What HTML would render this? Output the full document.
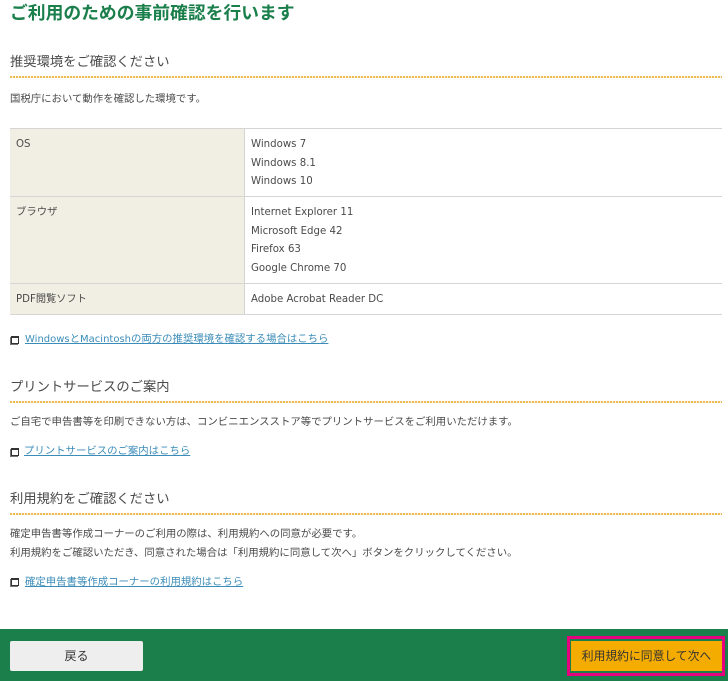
<!DOCTYPE html>
<html lang="ja"><head><meta charset="utf-8"><style>
html,body{margin:0;padding:0;width:728px;height:681px;overflow:hidden;background:#fff}
body{position:relative;font-family:"DejaVu Sans","Noto Sans CJK JP",sans-serif;color:#4a4a4a;font-size:10.4px}
.t{position:absolute;white-space:nowrap;line-height:16px;margin-top:1px}
.v{font-size:10.2px;margin-top:2px}
h1{position:absolute;margin:0;left:10px;top:0;font-size:17.8px;line-height:24px;color:#1a7f4b;font-weight:bold;white-space:nowrap;font-family:"Noto Sans CJK JP",sans-serif}
.h{position:absolute;left:10px;font-size:13.3px;line-height:20px;color:#4a4a4a;white-space:nowrap;font-family:"Noto Sans CJK JP",sans-serif}
.dot{position:absolute;left:10px;width:712px;height:2px;background:repeating-linear-gradient(90deg,#eebb55 0,#eebb55 2px,#fdf3dc 2px,#fdf3dc 3px)}
.b{position:absolute;background:#f1efe4}
.l{position:absolute;background:#d5d5d5}
a{color:#3b8cb8;text-decoration:underline}
a span{font-size:10px}
.ic{position:absolute;left:11px;width:6px;height:5px;border:1px solid #333;border-top-width:2px;box-shadow:-1px 1px 0 #777}
</style></head><body>
<h1>ご利用のための事前確認を行います</h1>
<div class="h" style="top:51px">推奨環境をご確認ください</div>
<div class="dot" style="top:76px"></div>
<div class="t" style="left:10px;top:90px">国税庁において動作を確認した環境です。</div>

<div class="b" style="left:10px;top:128px;width:234px;height:187px"></div>
<div class="l" style="left:10px;top:128px;width:712px;height:1px"></div>
<div class="l" style="left:10px;top:196px;width:712px;height:1px"></div>
<div class="l" style="left:10px;top:283px;width:712px;height:1px"></div>
<div class="l" style="left:10px;top:314px;width:712px;height:1px"></div>
<div class="l" style="left:244px;top:128px;width:1px;height:187px"></div>

<div class="t v" style="left:16px;top:135px">OS</div>
<div class="t v" style="left:251px;top:135px">Windows 7</div>
<div class="t v" style="left:251px;top:154px">Windows 8.1</div>
<div class="t v" style="left:251px;top:172px">Windows 10</div>
<div class="t" style="left:16px;top:203px">ブラウザ</div>
<div class="t v" style="left:251px;top:203px">Internet Explorer 11</div>
<div class="t v" style="left:251px;top:222px">Microsoft Edge 42</div>
<div class="t v" style="left:251px;top:240px">Firefox 63</div>
<div class="t v" style="left:251px;top:259px">Google Chrome 70</div>
<div class="t v" style="left:16px;top:290px">PDF閲覧ソフト</div>
<div class="t v" style="left:251px;top:290px">Adobe Acrobat Reader DC</div>

<div class="ic" style="top:336px"></div>
<div class="t" style="left:25px;top:330px"><a><span>Windows</span>と<span>Macintosh</span>の両方の推奨環境を確認する場合はこちら</a></div>

<div class="h" style="top:376px">プリントサービスのご案内</div>
<div class="dot" style="top:401px"></div>
<div class="t" style="left:10px;top:413px">ご自宅で申告書等を印刷できない方は、コンビニエンスストア等でプリントサービスをご利用いただけます。</div>
<div class="ic" style="top:448px"></div>
<div class="t" style="left:24px;top:442px"><a>プリントサービスのご案内はこちら</a></div>

<div class="h" style="top:488px">利用規約をご確認ください</div>
<div class="dot" style="top:513px"></div>
<div class="t" style="left:10px;top:525px">確定申告書等作成コーナーのご利用の際は、利用規約への同意が必要です。</div>
<div class="t" style="left:10px;top:544px">利用規約をご確認いただき、同意された場合は「利用規約に同意して次へ」ボタンをクリックしてください。</div>
<div class="ic" style="top:578px"></div>
<div class="t" style="left:25px;top:573px"><a>確定申告書等作成コーナーの利用規約はこちら</a></div>

<div style="position:absolute;left:0;top:629px;width:728px;height:52px;background:#1a7f4b"></div>
<div style="position:absolute;left:10px;top:641px;width:133px;height:30px;background:#eee;border-radius:2px;text-align:center;line-height:31px;font-size:12px;color:#333">戻る</div>
<div style="position:absolute;left:567px;top:636px;width:158px;height:40px;background:#e6007e"></div>
<div style="position:absolute;left:570px;top:639px;width:152px;height:34px;background:#1a7f4b"></div>
<div style="position:absolute;left:571px;top:641px;width:151px;height:30px;background:#f5ac00;text-align:center;line-height:31px;font-size:11.8px;color:#333;white-space:nowrap">利用規約に同意して次へ</div>
</body></html>
